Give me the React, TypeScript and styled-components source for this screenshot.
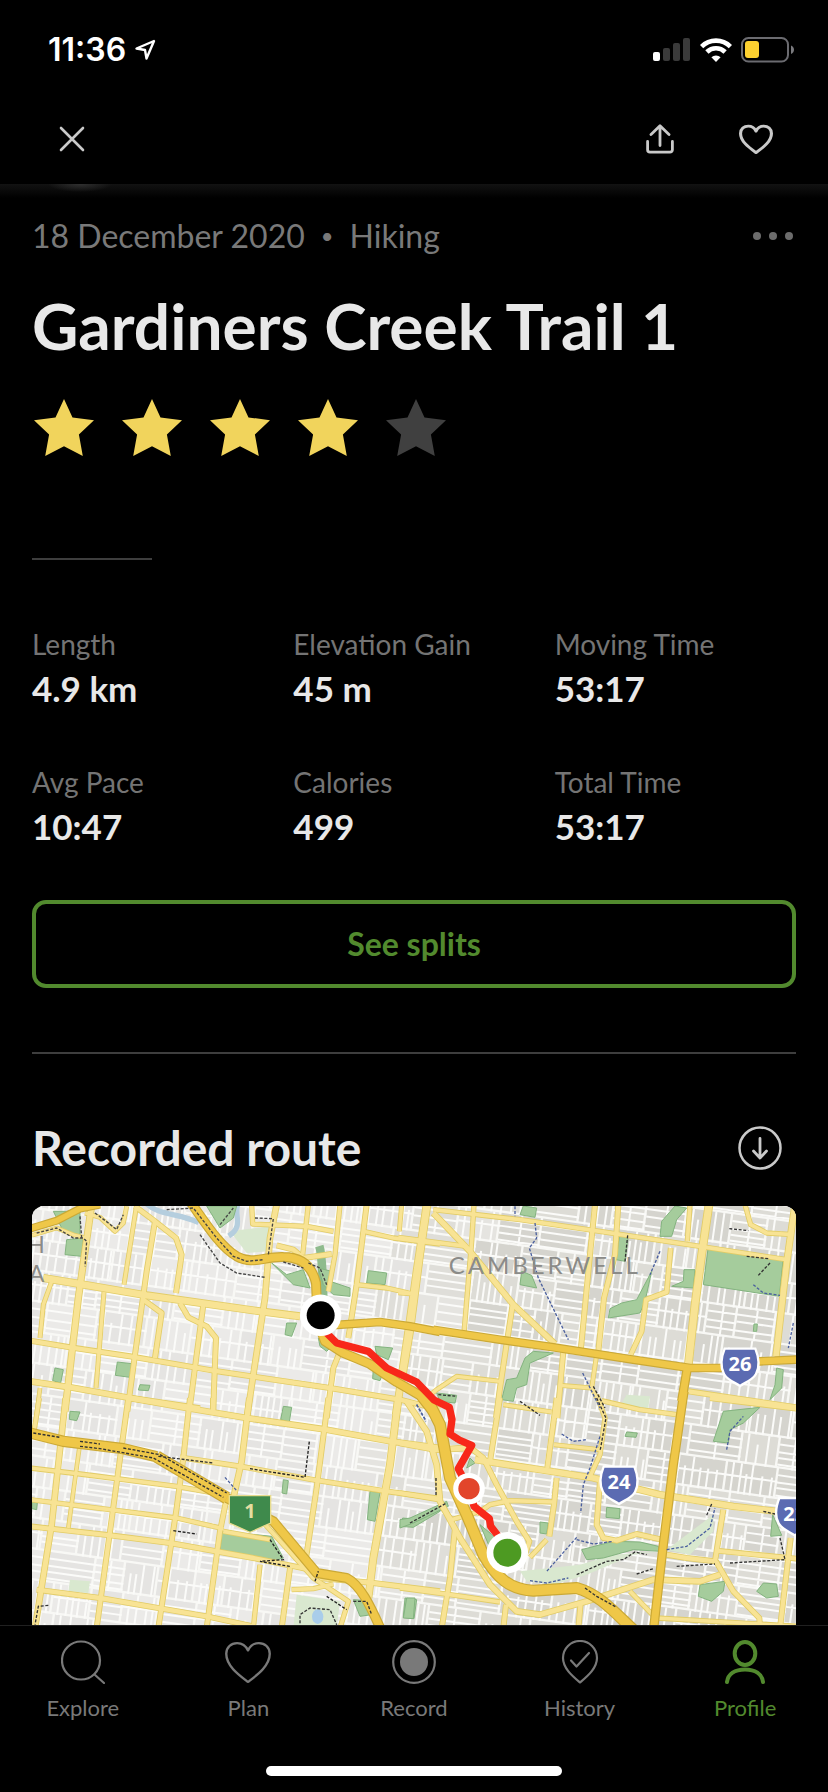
import React from "react";
import styled, { createGlobalStyle } from "styled-components";

const GlobalStyle = createGlobalStyle`
  * { box-sizing: border-box; }
  html, body { margin: 0; background: #000; }
  body { font-family: Lato, "Open Sans", sans-serif; color: #e8e8e8; }
  h1, h2, p, dl, dt, dd { margin: 0; font-weight: inherit; }
`;

const Screen = styled.div`
  display: flex;
  flex-direction: column;
  height: 100vh;
  overflow: hidden;
  background: #000;
`;

const StatusBar = styled.div`
  display: flex;
  align-items: center;
  justify-content: space-between;
  height: 98px;
  flex: none;
  padding: 2px 33px 0 48px;
  color: #fff;
`;

const StatusGroup = styled.div<{ $gap: number }>`
  display: flex;
  align-items: center;
  gap: ${(p) => p.$gap}px;
`;

const Clock = styled.span`
  font-family: Inter, "Liberation Sans", sans-serif;
  font-size: 32px;
  font-weight: 600;
  line-height: 40px;
`;

const TopBar = styled.header`
  display: flex;
  align-items: center;
  justify-content: space-between;
  flex: none;
  height: 86px;
  padding: 0 44px 4px;
`;

const TopActions = styled.div`
  display: flex;
  gap: 40px;
`;

const IconButton = styled.button`
  display: flex;
  align-items: center;
  justify-content: center;
  width: 56px;
  height: 56px;
  padding: 0;
  border: 0;
  background: none;
  color: #c9c9c9;
`;

const Content = styled.main`
  flex: 1;
  min-height: 0;
  overflow: hidden;
  padding: 32px 32px 0;
  background:
    radial-gradient(ellipse 32px 8px at 80px 0, #303030, transparent),
    linear-gradient(#121212, #000 14px);
`;

const MetaRow = styled.div`
  display: flex;
  align-items: center;
  justify-content: space-between;
  height: 40px;
`;

const Meta = styled.p`
  display: flex;
  gap: 16px;
  font-size: 32px;
  line-height: 40px;
  color: #797979;
`;

const Bullet = styled.span`
  font-size: 22px;
`;

const MoreButton = styled.button`
  display: flex;
  align-items: center;
  height: 40px;
  padding: 0 3px;
  border: 0;
  background: none;
  color: #6c6c6c;
`;

const Title = styled.h1`
  margin-top: 34px;
  font-size: 64px;
  font-weight: 700;
  line-height: 72px;
`;

const Rating = styled.div`
  display: flex;
  gap: 24px;
  margin: 36px 0 100px;
`;

const Rule = styled.hr<{ $short?: boolean }>`
  width: ${(p) => (p.$short ? "120px" : "100%")};
  height: 2px;
  margin: 0;
  border: 0;
  background: #3e3e3e;
`;

const Stats = styled.dl`
  display: grid;
  grid-template-columns: repeat(3, 1fr);
  gap: 56px 20px;
  margin: 68px 0 52px;
`;

const StatLabel = styled.dt`
  font-size: 28px;
  line-height: 32px;
  color: #747474;
`;

const StatValue = styled.dd`
  margin-top: 6px;
  font-size: 35px;
  font-weight: 700;
  line-height: 44px;
`;

const SplitsButton = styled.button`
  display: block;
  width: 100%;
  height: 88px;
  margin-bottom: 64px;
  border: 4px solid #528a2e;
  border-radius: 14px;
  background: none;
  font: 700 32px/40px Lato, "Open Sans", sans-serif;
  color: #528a2e;
`;

const SectionHead = styled.div`
  display: flex;
  align-items: center;
  justify-content: space-between;
  margin: 66px 0 30px;
  padding-right: 8px;
`;

const SectionTitle = styled.h2`
  font-size: 48px;
  font-weight: 700;
  line-height: 56px;
`;

const MapFrame = styled.div`
  overflow: hidden;
  border-radius: 12px;
  svg { display: block; width: 100%; height: auto; }
`;

const TabBar = styled.nav`
  display: flex;
  flex: none;
  padding-top: 14px;
  border-top: 1px solid #202020;
  background: #000;
`;

const Tab = styled.a<{ $active?: boolean }>`
  display: flex;
  flex: 1;
  flex-direction: column;
  align-items: center;
  gap: 10px;
  font-size: 22px;
  line-height: 28px;
  text-decoration: none;
  color: ${(p) => (p.$active ? "#528a2e" : "#797979")};
`;

const HomeArea = styled.div`
  display: flex;
  justify-content: center;
  flex: none;
  padding: 44px 0 16px;
`;

const HomeIndicator = styled.div`
  width: 296px;
  height: 10px;
  border-radius: 5px;
  background: #fff;
`;

/* ---------- icons ---------- */

const line = {
  fill: "none",
  stroke: "currentColor",
  strokeLinecap: "round" as const,
  strokeLinejoin: "round" as const,
};

const LocationIcon = () => (
  <svg width="22" height="22" viewBox="0 0 22 22" {...line} strokeWidth="2.4" aria-hidden="true">
    <path d="M20 2 2.5 9.5 11 11l1.500 8.500Z" />
  </svg>
);

const SignalIcon = () => (
  <svg width="38" height="24" viewBox="0 0 38 24" fill="#3a3a3a" aria-hidden="true">
    <rect x="0" y="14" width="7" height="9" rx="2" fill="#fff" />
    <rect x="10" y="10" width="7" height="13" rx="2" />
    <rect x="20" y="5" width="7" height="18" rx="2" />
    <rect x="30" y="0" width="7" height="23" rx="2" />
  </svg>
);

const WifiIcon = () => (
  <svg width="32" height="24" viewBox="0 0 32 24" aria-hidden="true">
    <g fill="none" stroke="#fff" strokeWidth="4.600">
      <path d="M1.600 8.600a20.400 20.400 0 0 1 28.800 0" />
      <path d="M6.900 14a12.900 12.900 0 0 1 18.200 0" />
    </g>
    <path d="M16 24l-4.600-4.700a6.500 6.500 0 0 1 9.200 0Z" fill="#fff" />
  </svg>
);

const BatteryIcon = () => (
  <svg width="54" height="26" viewBox="0 0 54 26" aria-hidden="true">
    <rect x="1" y="1" width="46" height="23.500" rx="6.500" fill="none" stroke="#6b6b70" strokeWidth="2" />
    <rect x="4" y="4" width="14" height="17" rx="3" fill="#fdd130" />
    <path d="M50 8.500c4 1.500 4 7 0 8.500Z" fill="#7a7a7e" />
  </svg>
);

const CloseIcon = () => (
  <svg width="26" height="26" viewBox="0 0 26 26" {...line} strokeWidth="2.600" aria-hidden="true">
    <path d="M2 2l22 22M24 2 2 24" />
  </svg>
);

const ShareIcon = () => (
  <svg width="28" height="30" viewBox="0 0 28 30" {...line} strokeWidth="2.800" aria-hidden="true">
    <path d="M14 21.500V2M5 10.500 14 1.800l9 8.700M1.600 17.500v8.300a2.400 2.400 0 0 0 2.400 2.400h20a2.400 2.400 0 0 0 2.400-2.400v-8.300" />
  </svg>
);

const HEART = "M22 41C14 34.500 2 25.500 2 13.500 2 7 6.500 3 12 3c4.500 0 8 2.600 10 7.200C24 5.600 27.500 3 32 3c5.500 0 10 4 10 10.500C42 25.500 30 34.500 22 41Z";

const HeartIcon = () => (
  <svg width="34" height="30" viewBox="0 0 44 43" preserveAspectRatio="none" {...line} strokeWidth="4" aria-hidden="true">
    <path d={HEART} />
  </svg>
);

const MoreIcon = () => (
  <svg width="40" height="10" viewBox="0 0 40 10" fill="currentColor" aria-hidden="true">
    <circle cx="4" cy="5" r="4" />
    <circle cx="20" cy="5" r="4" />
    <circle cx="36" cy="5" r="4" />
  </svg>
);

const Star = ({ on }: { on: boolean }) => (
  <svg width="64" height="60" viewBox="0 0 64 60" fill={on ? "#f1d45c" : "#404040"} aria-hidden="true">
    <path d="M32 1l8.500 18.400L62 22.200 46.900 36.400 50.800 58 32 48.200 13.200 58l3.900-21.600L2 22.200l21.500-2.800Z" />
  </svg>
);

const DownloadIcon = () => (
  <svg width="44" height="44" viewBox="0 0 44 44" {...line} strokeWidth="2.500" aria-hidden="true">
    <circle cx="22" cy="22" r="20.500" />
    <path d="M22 12.500v19M15.500 25l6.500 7 6.500-7" strokeWidth="2.800" />
  </svg>
);

const tabSvg = { width: 44, height: 44, viewBox: "0 0 44 44", ...line, strokeWidth: 2.2, "aria-hidden": true };

const ExploreIcon = () => (
  <svg {...tabSvg}>
    <circle cx="20" cy="20.500" r="19" />
    <path d="M33.500 34.500 43 43" />
  </svg>
);

const PlanIcon = () => (
  <svg {...tabSvg} width={50} viewBox="-1 0 46 43" preserveAspectRatio="none">
    <path d={HEART} />
  </svg>
);

const RecordIcon = () => (
  <svg {...tabSvg}>
    <circle cx="22" cy="22" r="20.800" />
    <circle cx="22" cy="22" r="14" fill="currentColor" stroke="none" />
  </svg>
);

const HistoryIcon = () => (
  <svg {...tabSvg}>
    <path d="M22 42.500C15 36.500 5 28.500 5 18a17 17 0 0 1 34 0c0 10.500-10 18.500-17 24.500Z" />
    <path d="M13 20.500l5.500 6L31 13" />
  </svg>
);

const ProfileIcon = () => (
  <svg {...tabSvg} strokeWidth={4}>
    <ellipse cx="22" cy="13.500" rx="10.300" ry="11.500" />
    <path d="M4 42c1-8 8-12.600 18-12.600S39 34 40 42" />
  </svg>
);

/* ---------- map ---------- */

type Tile = "nw" | "ne" | "sw" | "se";

/* Each map tile keeps its own origin; one unit is a third of a pixel. */
const TILE: Record<Tile, string> = {
  nw: "translate(-36 -54)",
  ne: "translate(1104 -54)",
  sw: "translate(-36 576)",
  se: "translate(1104 576)",
};

const STREETS: [Tile, number, string][] = [
  ["nw", 22, "M215 50 175 330 135 670"],
  ["nw", 15, "M350 50 312 290"],
  ["nw", 18, "M405 100 380 250 345 500 322 670"],
  ["nw", 18, "M345 55 405 100 468 150 485 200 468 315"],
  ["nw", 15, "M195 75 240 88 285 130 310 105 320 55"],
  ["nw", 14, "M36 142 110 120 165 142 200 150"],
  ["nw", 24, "M70 270 180 288 380 322 720 370 840 385"],
  ["nw", 15, "M95 280 70 350 60 450"],
  ["nw", 18, "M370 335 425 375 405 510"],
  ["nw", 18, "M480 345 505 388 560 415 588 450 582 600 580 670"],
  ["nw", 18, "M550 350 530 500 508 670"],
  ["nw", 18, "M30 458 150 478 330 505 580 548 930 600 1140 635 1260 665"],
  ["nw", 20, "M30 580 150 598 330 630 540 662"],
  ["nw", 20, "M770 50 750 150 735 330 700 560 682 680"],
  ["nw", 16, "M865 50 848 200"],
  ["nw", 16, "M695 50 698 108 860 115 940 130"],
  ["nw", 16, "M960 50 945 200 925 310"],
  ["nw", 18, "M1040 50 1010 290 985 450"],
  ["nw", 15, "M1145 50 1138 130"],
  ["nw", 24, "M1220 50 1190 250 1165 430 1128 680"],
  ["nw", 16, "M1030 130 1120 150 1260 168"],
  ["nw", 16, "M1010 290 1100 300 1180 318"],
  ["nw", 18, "M960 490 940 540 920 690"],
  ["nw", 18, "M770 172 820 185 850 210 935 198"],
  ["nw", 15, "M252 312 228 600"],
  ["nw", 14, "M60 600 50 680"],
  ["ne", 16, "M100 65 360 95 600 130 900 175 1160 215"],
  ["ne", 24, "M82 50 60 200 30 430 8 560"],
  ["ne", 20, "M100 75 210 190 340 350 465 468"],
  ["ne", 16, "M222 50 215 160 192 435"],
  ["ne", 16, "M-5 148 200 175"],
  ["ne", 14, "M-5 315 30 318"],
  ["ne", 18, "M338 350 318 480 300 600 288 690"],
  ["ne", 18, "M585 50 570 200 542 490"],
  ["ne", 18, "M655 50 645 200 612 330 595 490"],
  ["ne", 16, "M870 50 862 160"],
  ["ne", 26, "M927 50 905 200 885 350 865 530"],
  ["ne", 16, "M1035 50 1052 110 1100 135 1180 140"],
  ["ne", 22, "M1185 50 1160 225 1128 505"],
  ["ne", 17, "M812 180 800 312 738 335 725 430 692 500"],
  ["ne", 18, "M490 490 472 690"],
  ["ne", 15, "M590 500 575 600 480 592"],
  ["ne", 15, "M60 645 110 605 170 565 300 580"],
  ["ne", 14, "M575 600 590 630"],
  ["ne", 18, "M865 610 1190 658"],
  ["sw", 20, "M137 0 95 380 45 690"],
  ["sw", 18, "M325 0 270 400 230 690"],
  ["sw", 20, "M330 0 500 30 680 60 920 95 1110 130 1260 150"],
  ["sw", 18, "M510 0 490 180 470 330 415 690"],
  ["sw", 16, "M578 0 578 40"],
  ["sw", 20, "M688 0 665 190 640 300"],
  ["sw", 24, "M1135 0 1110 200 1060 480 1045 600"],
  ["sw", 18, "M925 0 890 270 855 500"],
  ["sw", 16, "M58 0 42 100"],
  ["sw", 16, "M30 210 180 228 470 265 610 290"],
  ["sw", 16, "M30 305 270 335 470 360 610 392"],
  ["sw", 18, "M30 385 270 412 450 435 700 480 870 515"],
  ["sw", 14, "M178 150 145 390"],
  ["sw", 17, "M480 178 660 205 880 245 1100 280 1260 302"],
  ["sw", 18, "M620 300 600 400 560 690"],
  ["sw", 16, "M720 500 700 690"],
  ["sw", 18, "M810 510 785 690"],
  ["sw", 18, "M900 540 1060 555 1260 580"],
  ["sw", 16, "M815 575 880 572 940 558"],
  ["sw", 16, "M700 340 880 540 985 610 960 690"],
  ["sw", 18, "M50 575 240 600 560 655 700 685"],
  ["sw", 16, "M610 400 750 425"],
  ["se", 18, "M300 0 270 190"],
  ["se", 18, "M470 0 442 210"],
  ["se", 16, "M590 -10 615 60 600 170 568 240"],
  ["se", 15, "M310 20 455 42"],
  ["se", 15, "M462 140 600 155"],
  ["se", 16, "M605 8 720 35 830 50"],
  ["se", 20, "M0 135 110 155 200 150"],
  ["se", 22, "M225 185 400 212 580 240 780 290 1000 325 1130 340"],
  ["se", 18, "M470 240 462 320 448 415"],
  ["se", 18, "M200 140 250 180 290 260 350 370 388 430 375 470"],
  ["se", 16, "M230 348 270 320 330 308 462 312"],
  ["se", 18, "M600 250 590 380 610 420 650 428 710 408 785 425"],
  ["se", 20, "M20 10 80 100 110 200 120 310 180 420 270 560 350 640 420 650 560 610 760 545 900 550 960 530"],
  ["se", 16, "M0 285 115 305"],
  ["se", 16, "M120 320 155 365 240 340"],
  ["se", 18, "M165 390 150 540 125 690"],
  ["se", 16, "M0 570 150 590 300 612"],
  ["se", 18, "M318 620 310 690"],
  ["se", 18, "M542 615 535 690"],
  ["se", 16, "M690 580 762 655"],
  ["se", 16, "M390 478 440 425"],
  ["se", 18, "M800 470 860 480 945 490 970 335"],
  ["se", 18, "M948 490 1000 580 1078 660 1080 690"],
  ["se", 17, "M950 458 1190 482"],
  ["se", 18, "M1172 420 1140 690"],
  ["se", 16, "M770 660 1190 685"],
  ["se", 18, "M930 0 1190 32"],
];

const HIGHWAYS: [Tile, number, string][] = [
  ["nw", 24, "M30 122 110 98 180 62 240 50"],
  ["nw", 30, "M510 40C560 110 600 175 650 205 700 232 730 205 790 207 840 207 875 230 888 285L893 400 915 460 970 495 1050 528 1130 582 1200 622 1245 680"],
  ["nw", 26, "M930 412 1080 402 1170 415 1260 432"],
  ["ne", 26, "M100 425 300 455 460 478 700 515 870 540 960 540 1080 520 1190 515"],
  ["ne", 28, "M862 540 845 640"],
  ["se", 28, "M852 -20 820 200 790 440 760 700"],
  ["se", 36, "M75 -10 120 80 150 240 200 350 250 470C290 540 330 575 400 578L530 570C600 590 640 640 705 700"],
  ["sw", 34, "M30 105 130 130 310 152 410 176"],
  ["sw", 38, "M410 176 620 300"],
  ["sw", 30, "M620 300 760 370 890 525 980 540C1020 560 1050 620 1085 700"],
];

const PARKS: [Tile, string][] = [
  ["nw", "M100 70 180 70 180 150 130 130ZM140 155 190 150 185 205 135 200Z"],
  ["nw", "M560 54H650L640 90 600 120Z"],
  ["nw", "M755 225 800 260 850 245 870 300 820 290ZM895 240 935 250 930 280 990 300 990 325 940 320 910 290Z"],
  ["nw", "M1045 248 1100 255 1095 290 1040 285ZM800 405 830 405 815 445 795 440Z"],
  ["nw", "M1065 475 1118 480 1105 515 1070 500ZM1060 540 1090 550 1080 578 1058 572ZM895 450 930 480 920 490 900 475Z"],
  ["nw", "M292 522 335 527 330 568 286 562ZM105 540 130 545 122 585 98 578ZM360 590 390 592 385 608 355 606Z"],
  ["ne", "M370 54 410 60 405 88 360 80ZM365 250 395 262 410 300 360 290Z"],
  ["ne", "M825 54 860 60 830 95 815 145 780 145 785 100ZM658 145 685 145 675 220 648 215Z"],
  ["ne", "M925 175 1150 210 1138 325 910 290ZM852 245 885 245 880 300 815 295 850 280Z"],
  ["ne", "M755 250 735 340 720 375 625 390 630 362 665 345 710 335Z"],
  ["ne", "M400 490 460 495 390 525 380 590 350 600 340 640 305 635 320 575 350 570 375 510Z"],
  ["ne", "M1130 540 1150 545 1145 600 1110 635 1125 590ZM1062 408 1072 408 1070 430 1060 430ZM110 615 170 622 165 645 120 640Z"],
  ["sw", "M790 25 815 28 808 72 782 65ZM790 245 805 248 800 288 786 285ZM150 40 180 42 170 68 148 64Z"],
  ["sw", "M605 400 755 415 790 480 740 495 600 462ZM1050 280 1080 283 1065 370 1042 365Z"],
  ["sw", "M1148 360 1200 365 1260 320 1260 340 1180 388 1140 385ZM1155 600 1190 605 1182 662 1150 658Z"],
  ["sw", "M1000 605 1040 608 1055 650 1020 655ZM36 310 52 315 50 335 36 332Z"],
  ["se", "M970 40 1080 28 1030 75 990 95 985 135 940 130Z"],
  ["se", "M545 455 640 430 720 432 775 445 780 460 700 455 610 480 560 485Z"],
  ["se", "M420 372 445 375 440 408 420 405ZM620 328 660 332 658 362 618 358ZM900 560 975 550 970 580 935 610 895 595Z"],
  ["se", "M1090 555 1130 558 1135 595 1100 600 1070 580ZM1118 350 1140 400 1145 412 1112 415ZM20 600 45 600 40 662 10 660Z"],
  ["se", "M0 365 30 360 140 310 145 325 40 375 0 390ZM210 180 225 195 200 210ZM240 380 300 430 270 450ZM680 102 712 105 708 118 675 115Z"],
];

const PALE_PARKS: [Tile, string][] = [
  ["nw", "M630 130 750 115 740 190 680 195Z"],
  ["se", "M360 520 540 500 640 470 780 460 700 470 560 530 460 560 380 550Z"],
  ["se", "M800 455 940 350 940 400 870 470Z"],
  ["sw", "M830 590 960 610 950 690 820 690ZM150 545 210 550 205 585 145 580Z"],
  ["ne", "M680 620 750 625 745 660 660 655Z"],
];

const FOOTPATHS: [Tile, string, string][] = [
  ["nw", "#444", "M50 135 110 120 160 150 190 150 200 160 195 235M180 85 185 150M225 75 265 105 290 125 310 80"],
  ["nw", "#444", "M440 65 520 60 590 150 640 205 680 220 730 215M540 140 600 225 650 255 735 268M600 110 640 60"],
  ["nw", "#444", "M705 90 760 92 745 200M790 222 850 240M865 225 900 240 920 290"],
  ["ne", "#4a5f9e", "M345 55V85M405 105 410 150 388 180 415 270 505 455M780 190 750 260M548 555 600 660M1180 405 1165 480"],
  ["ne", "#333", "M988 122 1045 128M683 142 675 220M1110 225 1075 262M115 620 170 625M580 595 615 660M1040 205 1105 212"],
  ["ne", "#4a5f9e", "M1060 290 1090 315 1140 322"],
  ["sw", "#333", "M40 105 120 118M180 130 240 138M180 145 240 152 400 180 610 298M310 150 420 170 620 285M415 175 580 195"],
  ["sw", "#222", "M690 212 855 238 868 130M460 398 530 408M750 425 790 485 720 490 810 505M920 595 980 635M885 550 895 520"],
  ["sw", "#333", "M85 622 55 625 45 680M840 690 840 650 870 630 930 635 950 680M1000 610 1040 610 1055 650"],
  ["sw", "#4a5f9e", "M615 238 650 278M1190 20 1218 70"],
  ["se", "#4a5f9e", "M50 20 78 68M485 108 520 130 560 125M600 115 570 210 550 260 542 345M530 418 440 520M530 425 580 438 640 430"],
  ["se", "#4a5f9e", "M390 548 440 555 505 540M800 455 860 445 930 390 945 330M980 155 990 100 1030 55"],
  ["se", "#333", "M590 0 618 60 600 160M360 10 420 52M108 240 108 295M30 375 140 315M830 505 945 498M990 495 1155 485 1140 420"],
  ["se", "#333", "M530 530 620 490 670 485 705 462 740 470M555 570 590 595 650 628M710 528 760 512M935 318 920 352M1090 340 1125 348"],
];

/* Local streets: city blocks cut by thin white lanes, from a seeded sequence. */
function buildBlocks() {
  let seed = 7;
  const rnd = () => {
    seed = (seed * 16807) % 2147483647;
    return seed / 2147483647;
  };
  const blocks: { x: number; y: number; w: number; h: number; shade: number }[] = [];
  let lanes = "";
  for (let y = -360; y < 1440; y += 92) {
    let x = -60;
    while (x < 2560) {
      const w = 80 + Math.round(rnd() * 80);
      blocks.push({ x, y, w: w - 7, h: 85, shade: rnd() });
      if (rnd() > 0.4) {
        for (let k = 18; k < w - 10; k += 16 + Math.round(rnd() * 16)) {
          const top = rnd() > 0.6 ? 30 : 0;
          lanes += `M${x + k} ${y + top}V${y + 92}`;
        }
        if (rnd() > 0.5) lanes += `M${x} ${y + 40}h${w}`;
      } else {
        for (let k = 20; k < 85; k += 16 + Math.round(rnd() * 12)) {
          lanes += `M${x} ${y + k}h${w}`;
        }
        if (rnd() > 0.5) lanes += `M${x + Math.round(w / 2)} ${y}v92`;
      }
      x += w;
    }
  }
  return { blocks, lanes };
}

const { blocks, lanes } = buildBlocks();

const blockFill = (x: number, shade: number) => {
  if (x > 1300) return shade > 0.5 ? "#d5d4ce" : "#dddcd6";
  if (x > 1050) return shade > 0.5 ? "#dfded9" : "#e5e4e0";
  return shade > 0.5 ? "#e5e4e2" : "#ebeae8";
};

const Roads = ({ items, extra, color }: { items: [Tile, number, string][]; extra: number; color: string }) => (
  <g fill="none" stroke={color} strokeLinejoin="round">
    {items.map(([tile, w, d], i) => (
      <path key={i} transform={TILE[tile]} d={d} strokeWidth={w + extra} />
    ))}
  </g>
);

const RouteShield = ({ x, y, label }: { x: number; y: number; label: string }) => (
  <g transform={`translate(${x} ${y})`}>
    <path
      d="M-46-54H46C58-24 60 0 48 22 38 40 18 46 0 58-18 46-38 40-48 22-60 0-58-24-46-54Z"
      fill="#5b6bb2"
      stroke="#fff"
      strokeWidth="7"
    />
    <text y="14" textAnchor="middle" fontFamily="'Noto Sans', sans-serif" fontWeight="700" fontSize="60" fill="#fff">
      {label}
    </text>
  </g>
);

const Pin = ({ x, y, r, fill }: { x: number; y: number; r: number; fill: string }) => (
  <>
    <circle cx={x} cy={y} r={r * 1.48} fill="#fff" />
    <circle cx={x} cy={y} r={r} fill={fill} />
  </>
);

const RouteMap = () => (
  <svg viewBox="0 0 2292 1320" role="img" aria-label="Map of the recorded route">
    <rect width="2292" height="1320" fill="#f8f8f5" />
    <g transform="rotate(8)">
      {blocks.map((b, i) => (
        <rect key={i} x={b.x} y={b.y} width={b.w} height={b.h} fill={blockFill(b.x, b.shade)} />
      ))}
      <path d={lanes} fill="none" stroke="#fbfbf9" strokeWidth="6" />
    </g>
    <g fill="#d9e8cf">
      {PALE_PARKS.map(([tile, d], i) => (
        <path key={i} transform={TILE[tile]} d={d} />
      ))}
    </g>
    <path d="M340-10C380 30 440 20 500 50M590 90C640 60 600 20 620-10" fill="none" stroke="#b5cede" strokeWidth="16" />
    <path d="M862 120C872 150 872 220 874 290" fill="none" stroke="#8fbb8d" strokeWidth="26" />
    <g fill="#a5cc9c" stroke="#83b37f" strokeWidth="3" strokeLinejoin="round">
      {PARKS.map(([tile, d], i) => (
        <path key={i} transform={TILE[tile]} d={d} />
      ))}
    </g>
    <ellipse cx="857" cy="1232" rx="17" ry="22" fill="#a9cdea" />
    <Roads items={STREETS} extra={0} color="#e2cc66" />
    <Roads items={STREETS} extra={-5} color="#f8e394" />
    <Roads items={HIGHWAYS} extra={0} color="#cba936" />
    <Roads items={HIGHWAYS} extra={-7} color="#efc748" />
    <g fill="none" strokeWidth="4" strokeDasharray="9 5">
      {FOOTPATHS.map(([tile, color, d], i) => (
        <path key={i} transform={TILE[tile]} d={d} stroke={color} />
      ))}
    </g>
    <g fontFamily="Lato, sans-serif" fill="#8b8b88">
      <text x="1250" y="203" fontSize="72" letterSpacing="9">CAMBERWELL</text>
      <text x="-14" y="140" fontSize="69">H</text>
      <text x="-10" y="228" fontSize="69">A</text>
    </g>
    <g transform="translate(654 921)">
      <path d="M-62-52H62V30L0 58-62 30Z" fill="#3f8a4c" stroke="#e8dc8e" strokeWidth="4" />
      <text y="16" textAnchor="middle" fontFamily="'Noto Sans', sans-serif" fontWeight="700" fontSize="60" fill="#e5dda0">
        1
      </text>
    </g>
    <RouteShield x={2124} y={482} label="26" />
    <RouteShield x={1761} y={836} label="24" />
    <RouteShield x={2288} y={930} label="22" />
    <path
      d="M879 376 914 411 1009 436 1064 486 1154 528 1206 582 1252 604 1260 640 1254 684 1282 702 1319 718 1279 788 1311 848 1326 901 1372 938 1376 961 1414 1010"
      fill="none"
      stroke="#f8281a"
      strokeWidth="22"
      strokeLinejoin="round"
    />
    <Pin x={866} y={328} r={42} fill="#000" />
    <Pin x={1311} y={848} r={32} fill="#e2452b" />
    <Pin x={1426} y={1040} r={42} fill="#4d9a22" />
  </svg>
);

/* ---------- page ---------- */

const STATS = [
  ["Length", "4.9 km"],
  ["Elevation Gain", "45 m"],
  ["Moving Time", "53:17"],
  ["Avg Pace", "10:47"],
  ["Calories", "499"],
  ["Total Time", "53:17"],
];

const TABS = [
  { label: "Explore", Icon: ExploreIcon },
  { label: "Plan", Icon: PlanIcon },
  { label: "Record", Icon: RecordIcon },
  { label: "History", Icon: HistoryIcon },
  { label: "Profile", Icon: ProfileIcon, active: true },
];

export default function App() {
  return (
    <Screen>
      <GlobalStyle />
      <StatusBar>
        <StatusGroup $gap={8}>
          <Clock>11:36</Clock>
          <LocationIcon />
        </StatusGroup>
        <StatusGroup $gap={9}>
          <SignalIcon />
          <WifiIcon />
          <BatteryIcon />
        </StatusGroup>
      </StatusBar>
      <TopBar>
        <IconButton aria-label="Close"><CloseIcon /></IconButton>
        <TopActions>
          <IconButton aria-label="Share"><ShareIcon /></IconButton>
          <IconButton aria-label="Like"><HeartIcon /></IconButton>
        </TopActions>
      </TopBar>
      <Content>
        <MetaRow>
          <Meta>
            <span>18 December 2020</span>
            <Bullet>•</Bullet>
            <span>Hiking</span>
          </Meta>
          <MoreButton aria-label="More options"><MoreIcon /></MoreButton>
        </MetaRow>
        <Title>Gardiners Creek Trail 1</Title>
        <Rating role="img" aria-label="4 out of 5 stars">
          {[1, 2, 3, 4, 5].map((n) => <Star key={n} on={n <= 4} />)}
        </Rating>
        <Rule $short />
        <Stats>
          {STATS.map(([label, value]) => (
            <div key={label}>
              <StatLabel>{label}</StatLabel>
              <StatValue>{value}</StatValue>
            </div>
          ))}
        </Stats>
        <SplitsButton>See splits</SplitsButton>
        <Rule />
        <SectionHead>
          <SectionTitle>Recorded route</SectionTitle>
          <IconButton aria-label="Download route"><DownloadIcon /></IconButton>
        </SectionHead>
        <MapFrame><RouteMap /></MapFrame>
      </Content>
      <TabBar>
        {TABS.map(({ label, Icon, active }) => (
          <Tab key={label} href="#" $active={active} aria-current={active ? "page" : undefined}>
            <Icon />
            {label}
          </Tab>
        ))}
      </TabBar>
      <HomeArea><HomeIndicator /></HomeArea>
    </Screen>
  );
}
